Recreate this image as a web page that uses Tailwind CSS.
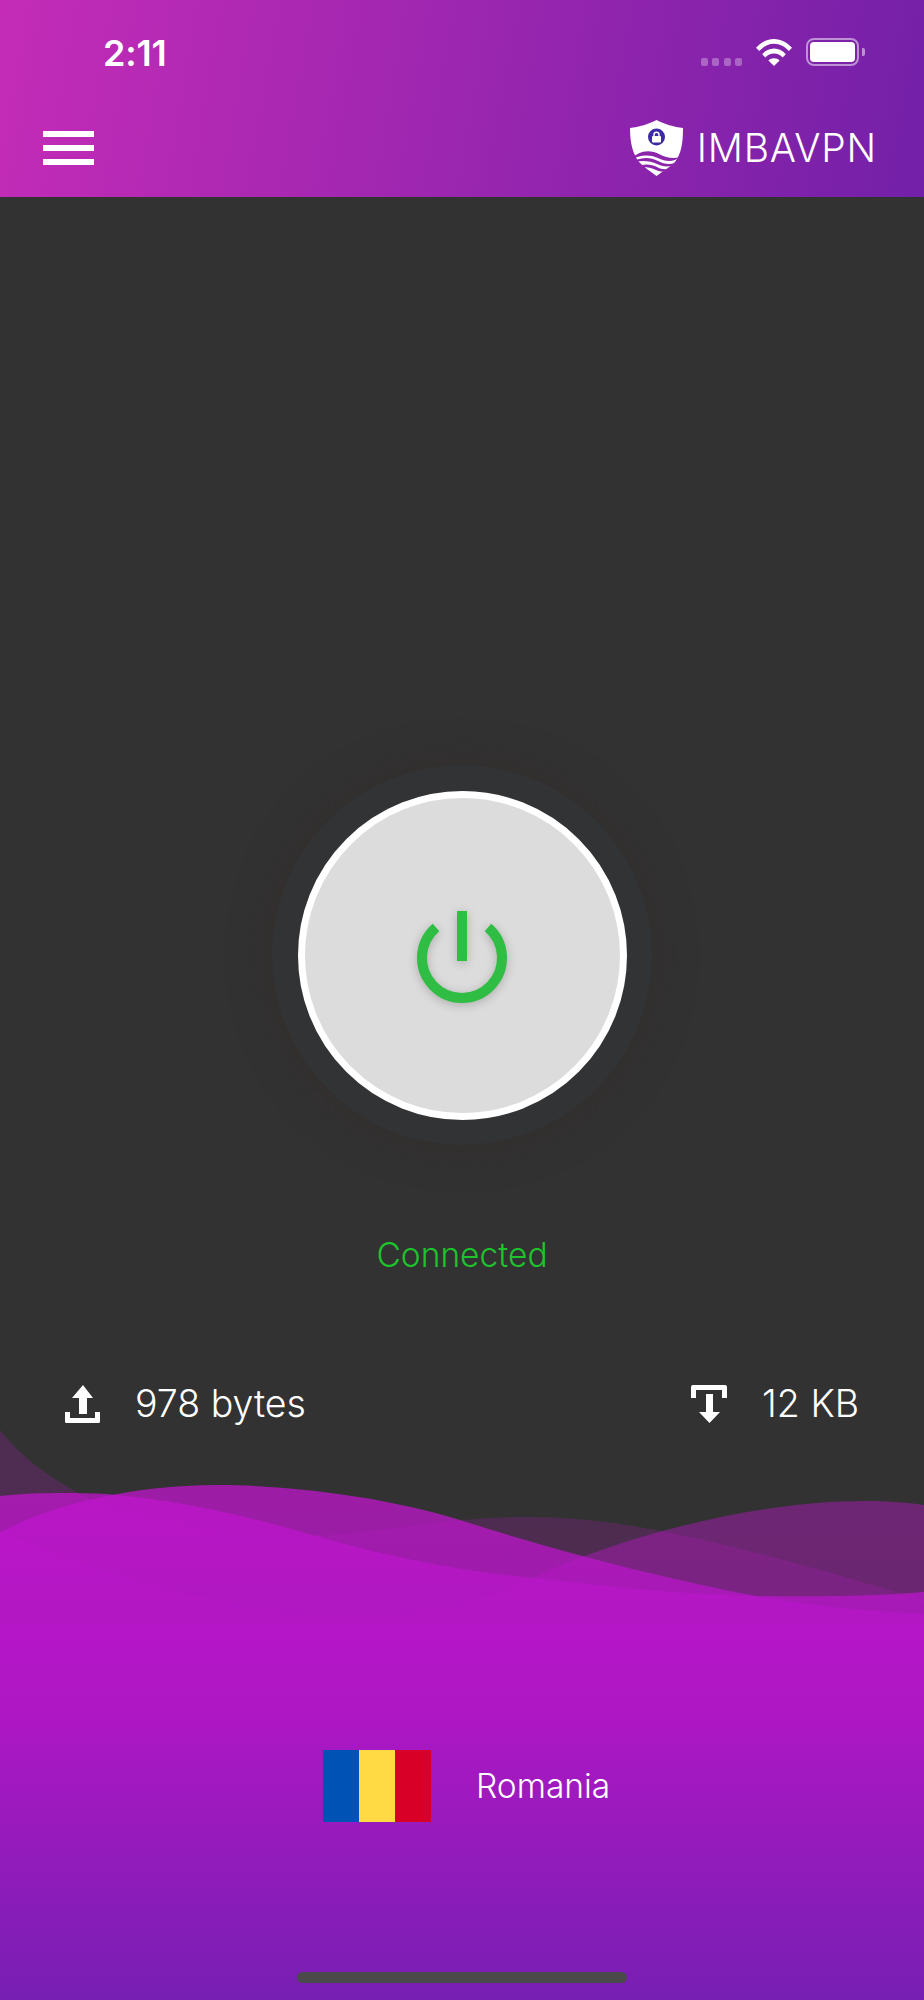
<!DOCTYPE html>
<html lang="en">
<head>
<meta charset="utf-8">
<title>IMBAVPN</title>
<script src="https://cdn.jsdelivr.net/npm/@tailwindcss/browser@4"></script>
</head>
<body class="m-0 bg-[#323232]">
<div class="relative w-[924px] h-[2000px] overflow-hidden bg-[#323232] font-['Inter',sans-serif] text-white">
  <svg class="absolute left-0 top-[1420px] w-[924px] h-[580px]" viewBox="0 1420 924 580" fill="none">
    <defs>
      <linearGradient id="wg" gradientUnits="userSpaceOnUse" x1="0" y1="1480" x2="0" y2="2000">
        <stop offset="0" stop-color="#c215ce"/>
        <stop offset="0.45" stop-color="#ae17c4"/>
        <stop offset="1" stop-color="#771fb3"/>
      </linearGradient>
    </defs>
    <path fill="url(#wg)" fill-opacity="0.2" d="M0 1430C25 1462 55 1480 85 1497C150 1525 250 1540 330 1535C400 1530 450 1517 530 1517C620 1517 720 1540 896 1592L924 1600L924 2000L0 2000Z"/>
    <path fill="url(#wg)" fill-opacity="0.42" d="M0 1532C90 1565 200 1614 354 1614C450 1614 500 1595 533 1578C600 1545 740 1501 866 1501C890 1501 910 1503 924 1505L924 2000L0 2000Z"/>
    <path fill="url(#wg)" fill-opacity="0.75" d="M0 1533C40 1510 120 1485 218 1485C280 1485 380 1495 460 1520C510 1536 620 1570 766 1598C830 1608 880 1612 924 1614L924 2000L0 2000Z"/>
    <path fill="url(#wg)" fill-opacity="0.75" d="M0 1496C40 1492 80 1493 106 1494C180 1500 240 1515 295 1530C380 1555 450 1570 533 1578C620 1588 700 1596 766 1596C820 1597 880 1596 924 1592L924 2000L0 2000Z"/>
    <rect x="0" y="1625" width="924" height="375" fill="url(#wg)"/>
  </svg>

  <header class="relative h-[197px] bg-[linear-gradient(100deg,#c42cb7,#7320a8)]">
    <div class="flex items-start h-[99px] pt-[33px] pl-[103px]">
      <span class="text-[36px] leading-[40px] font-semibold tracking-[-0.2px]">2:11</span>
      <div class="ml-auto flex items-start">
        <div class="flex gap-[4.5px] mt-[25px] mr-[14px]">
          <span class="w-[7px] h-[7.5px] rounded-[2px] bg-white/30"></span>
          <span class="w-[7px] h-[7.5px] rounded-[2px] bg-white/30"></span>
          <span class="w-[7px] h-[7.5px] rounded-[2px] bg-white/30"></span>
          <span class="w-[7px] h-[7.5px] rounded-[2px] bg-white/30"></span>
        </div>
        <svg class="w-[36px] h-[27px] mt-[6px]" viewBox="0 0 36 27" fill="none">
          <path d="M0 8.8C4.6 3.6 11 0 18 0s13.400 3.600 18 8.800l-3.200 3.200C29 7.800 23.800 4.800 18 4.800S7 7.800 3.200 12Z" fill="#fff"/>
          <path d="M6.200 15.200C9.200 11.800 13.400 9.600 18 9.600s8.800 2.200 11.800 5.600l-3.200 3.200C24.400 16 21.400 14.400 18 14.400s-6.400 1.600-8.600 4Z" fill="#fff"/>
          <path d="M12.400 21.600C13.800 20 15.800 19.200 18 19.200s4.200.8 5.600 2.400L18 27Z" fill="#fff"/>
        </svg>
        <div class="ml-[14px] mt-[5px] w-[53px] h-[28px] rounded-[8px] border-2 border-white/50 p-[2px]">
          <div class="w-full h-full rounded-[4px] bg-white"></div>
        </div>
        <span class="ml-[3px] mt-[15px] w-[3px] h-[8px] rounded-r-[2px] bg-white/50 mr-[59px]"></span>
      </div>
    </div>
    <div class="flex items-center h-[98px] pl-[43px]">
      <div class="flex flex-col gap-[8.500px] w-[51px]">
        <span class="h-[5.500px] bg-white"></span>
        <span class="h-[5.500px] bg-white"></span>
        <span class="h-[5.500px] bg-white"></span>
      </div>
      <div class="ml-auto flex items-center pr-[47px]">
        <svg class="w-[56px] h-[56px]" viewBox="0 0 56 56" fill="none">
          <path d="M1 8C10 7 20 4 27.500 0C35 4 45 7 54 8C54 24 52 34 46 42C41 47 33 52 27.500 56C22 52 15 47 10 42C4 34 1 24 1 8Z" fill="#fff"/>
          <circle cx="27.500" cy="17" r="8.500" fill="#3a2aa8"/>
          <rect x="23" y="16" width="9" height="6.500" rx="1" fill="#fff"/>
          <path d="M25 16.500v-1.800a2.500 2.500 0 0 1 5 0v1.800" stroke="#fff" stroke-width="1.400"/>
          <path d="M1 40C9 31 20 29 30 34C37 38 45 39 51 37C45 42 37 42 29 38C20 34 10 35 1 40Z" fill="#8d25ab"/>
          <path d="M0 44C9 37 20 36 29 41C36 45 44 45 51 41C45 47 36 48 28 44C20 40 9 40 0 44Z" fill="#8d25ab"/>
          <path d="M6 48C14 43 22 44 28 47C33 50 39 50 46 47C40 52 33 53 27 50C21 47 13 46 6 48Z" fill="#8d25ab"/>
        </svg>
        <span class="ml-[12px] text-[39px] leading-[40px] font-light tracking-[0.8px]">IMBAVPN</span>
      </div>
    </div>
  </header>

  <main class="relative flex flex-col">
    <div class="mt-[568px] self-center flex items-center justify-center w-[380px] h-[380px] rounded-full bg-[#323335] shadow-[0_0_30px_12px_#332f2f]">
      <div class="flex items-center justify-center w-[329px] h-[329px] rounded-full border-[7px] border-white bg-[#dcdcdc]">
        <svg class="w-[100px] h-[110px] mt-[4px] drop-shadow-[0_2px_5px_rgba(0,0,0,0.22)]" viewBox="0 0 100 110" fill="none">
          <path d="M24 25.500A40 40 0 1 0 76 25.500" stroke="#2fbd43" stroke-width="10"/>
          <rect x="45" y="9" width="10" height="50" fill="#2fbd43"/>
        </svg>
      </div>
    </div>

    <p class="mt-[90px] text-center text-[33.500px] leading-[40px] font-light text-[#1ec42c]">Connected</p>

    <div class="mt-[110px] flex items-center justify-between h-[38px] pl-[65px] pr-[65px]">
      <div class="flex items-center">
        <svg class="w-[35px] h-[38px]" viewBox="0 0 35 38" fill="#fff">
          <path d="M18 0L28 13H22V29H14V13H7Z"/>
          <path d="M0 27H5V33H30V27H35V36.500Q35 38 33.500 38H1.500Q0 38 0 36.500Z"/>
        </svg>
        <span class="ml-[35px] text-[37.500px] leading-[40px] font-light">978 bytes</span>
      </div>
      <div class="flex items-center">
        <svg class="w-[36px] h-[38px]" viewBox="0 0 36 38" fill="#fff">
          <path d="M2 0H34Q36 0 36 2V13H31V5H5V13H0V2Q0 0 2 0Z"/>
          <path d="M15 9H22V27H29L18.500 38L8 27H15Z"/>
        </svg>
        <span class="ml-[35px] text-[37.500px] leading-[40px] font-light">12 KB</span>
      </div>
    </div>

    <div class="mt-[327px] flex items-center pl-[323px]">
      <div class="flex w-[108px] h-[72px]">
        <span class="flex-1 bg-[#0052b4]"></span>
        <span class="flex-1 bg-[#ffda44]"></span>
        <span class="flex-1 bg-[#d80027]"></span>
      </div>
      <span class="ml-[45px] text-[33.500px] leading-[40px] font-light">Romania</span>
    </div>

    <div class="mt-[150px] self-center w-[330px] h-[11px] rounded-full bg-[#4a4a4a]"></div>
  </main>
</div>
</body>
</html>
